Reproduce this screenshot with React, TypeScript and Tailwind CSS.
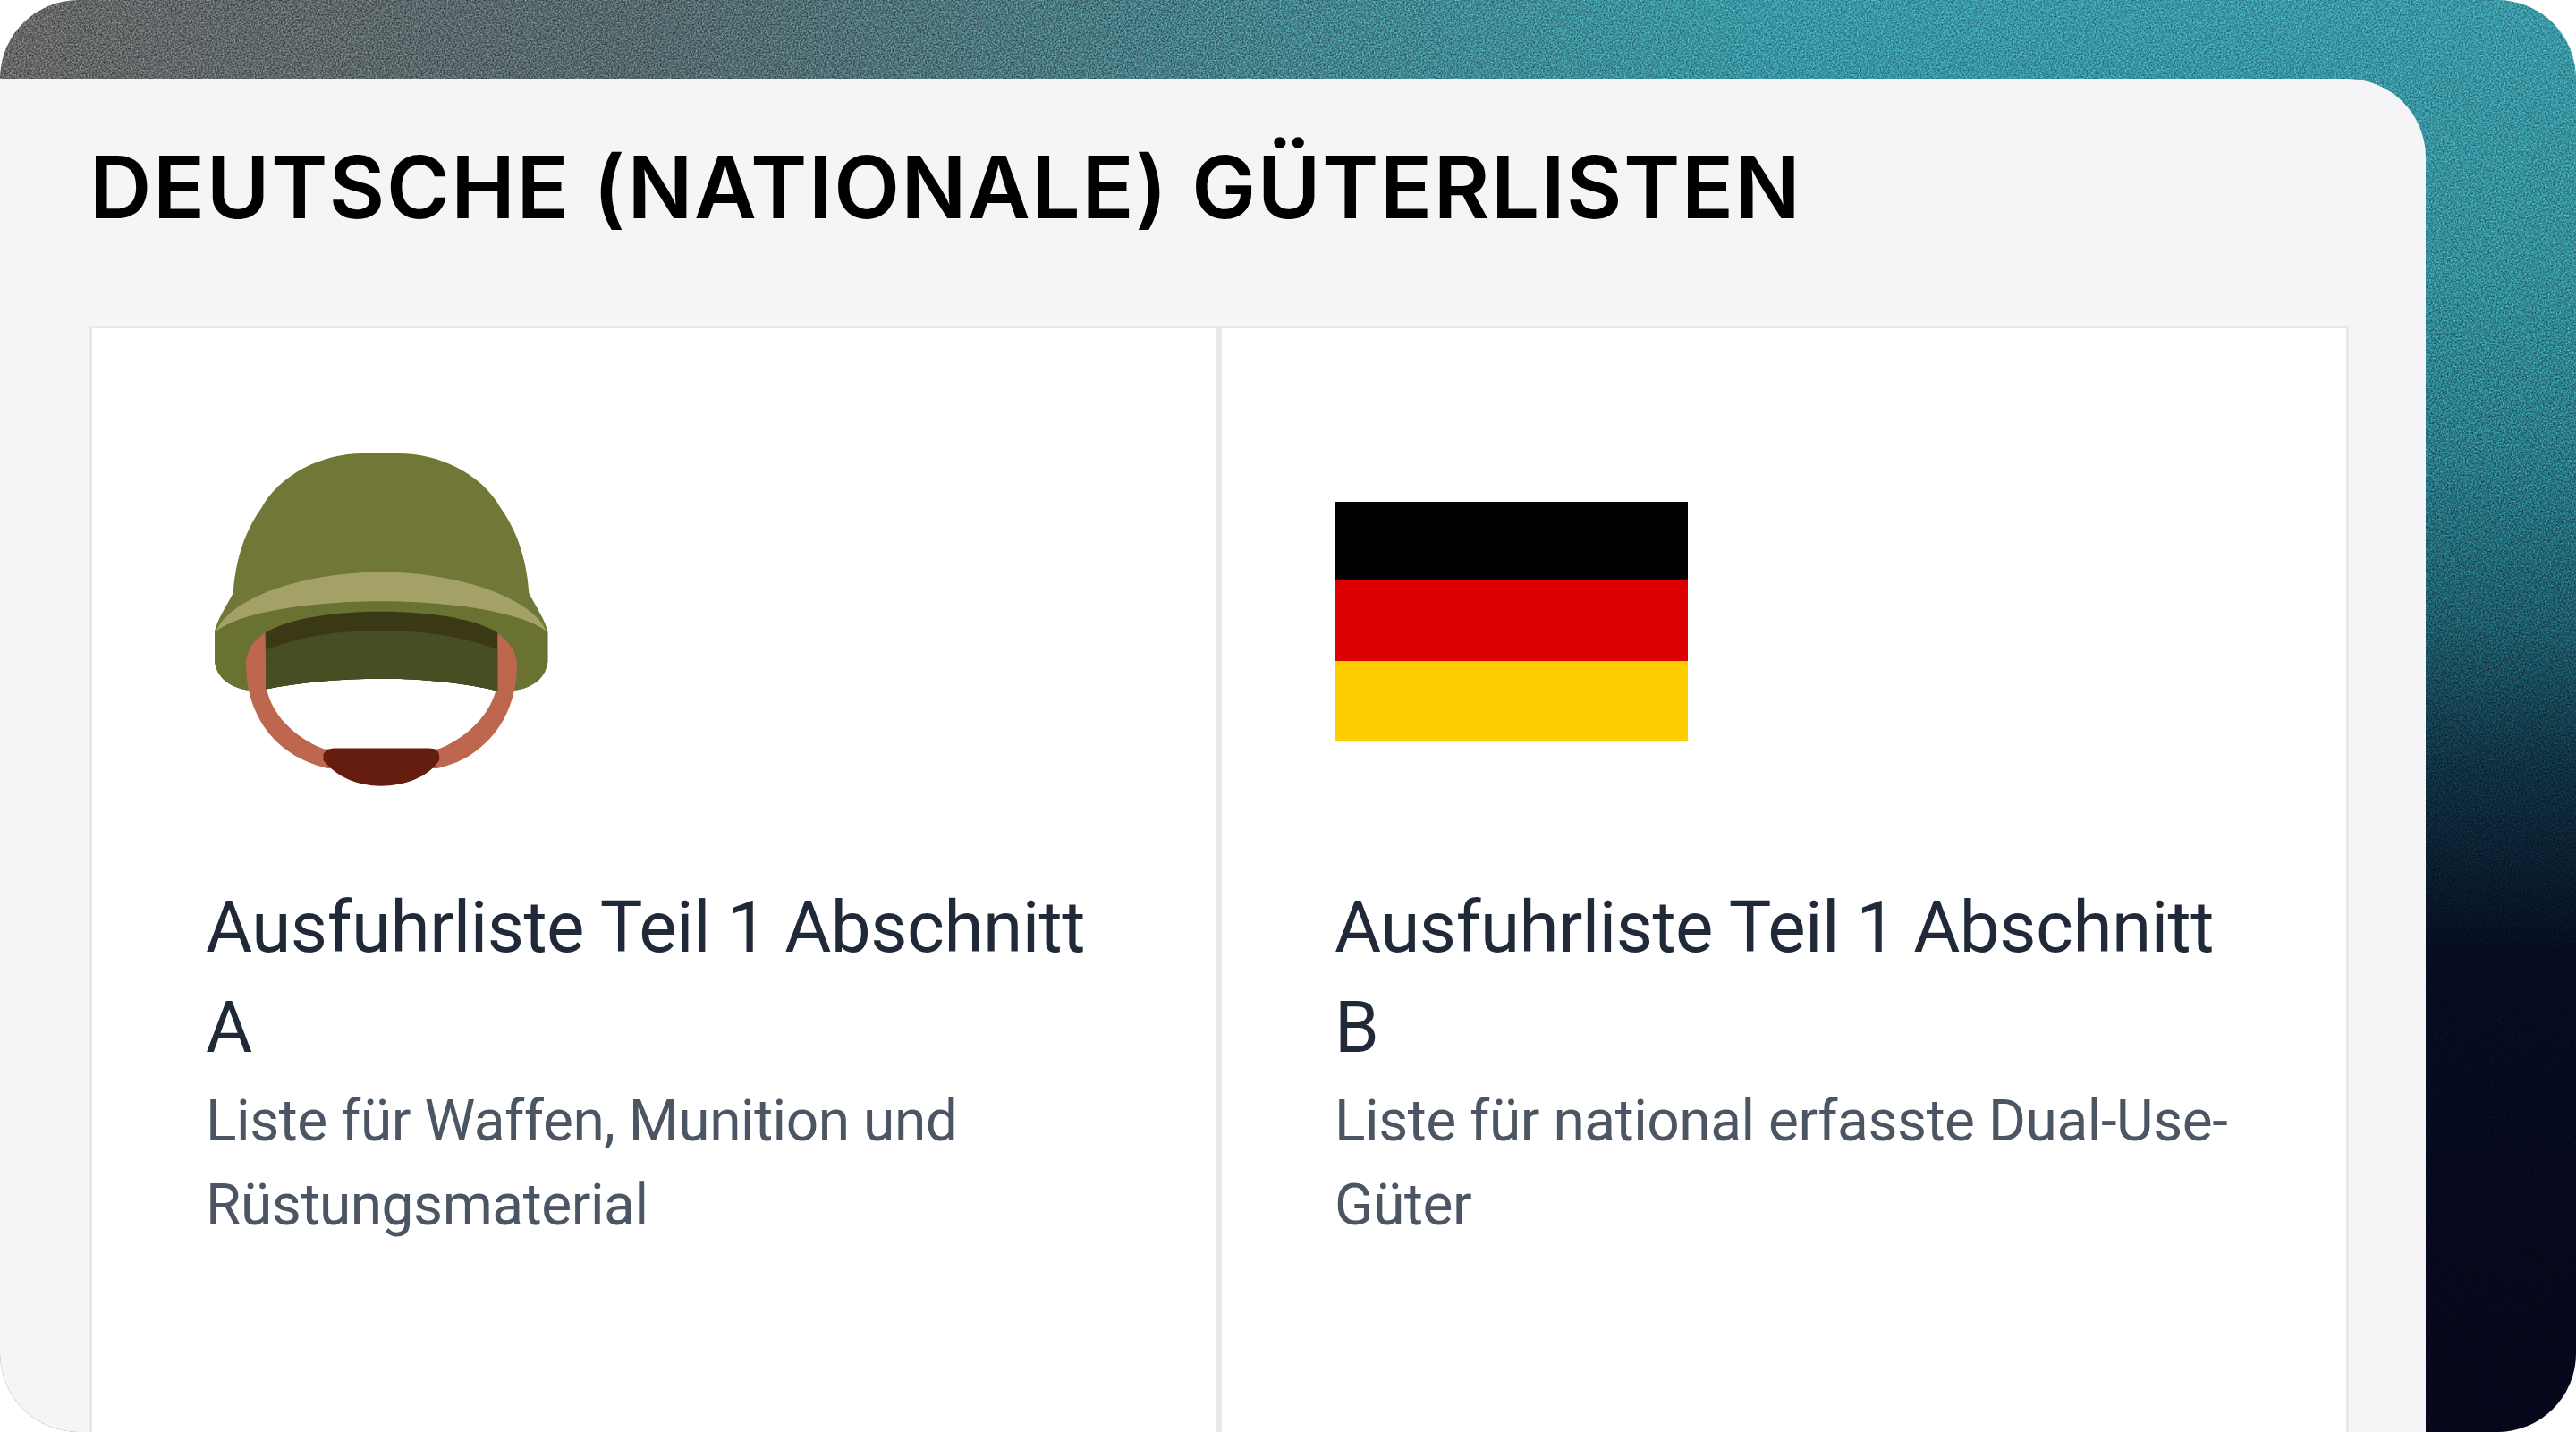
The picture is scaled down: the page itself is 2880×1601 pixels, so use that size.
const Helmet = () => (
  <svg viewBox="180 140 1120 1120" className="w-[374px] h-[374px]">
    <path
      d="M290 935 C235 925 190 895 183 840 L183 740 C190 700 225 650 245 610 C252 500 285 400 340 325 C400 215 540 143 680 143 L800 143 C940 143 1080 215 1140 325 C1195 400 1228 500 1235 610 C1255 650 1290 700 1298 740 L1298 840 C1291 895 1250 925 1195 935 L1130 938 C1010 910 880 897 740 897 C600 897 470 910 354 932 Z"
      fill="#717837"
    />
    <path
      d="M183 740 C260 680 480 638 740 638 C1000 638 1220 680 1298 740 L1298 840 C1291 895 1250 925 1195 935 L1130 938 C1010 910 880 897 740 897 C600 897 470 910 354 932 L290 935 C235 925 190 895 183 840 Z"
      fill="#6a7232"
    />
    <path
      d="M188 738 C225 640 450 542 740 540 C1030 542 1255 640 1293 738 C1220 680 1000 638 740 638 C480 638 260 680 188 738 Z"
      fill="#a3a165"
    />
    <path
      d="M350 745 C305 775 288 810 288 850 C288 960 330 1060 410 1125 C460 1165 510 1185 560 1197 L930 1197 C980 1185 1030 1165 1075 1125 C1155 1060 1195 960 1195 850 C1195 810 1170 775 1130 745 L1125 935 C1105 1010 1040 1090 930 1133 L550 1133 C440 1090 375 1010 358 935 Z"
      fill="#bd674f"
    />
    <path d="M354 742 C440 690 600 672 740 672 C880 672 1040 690 1130 742 L1130 938 C1010 910 880 897 740 897 C600 897 470 910 354 932 Z" fill="#3b3816" />
    <path d="M354 800 C470 755 600 736 740 736 C880 736 1020 755 1130 800 L1130 938 C1010 910 880 897 740 897 C600 897 470 910 354 932 Z" fill="#474e23" />
    <path d="M547 1150 C555 1135 570 1130 590 1130 L900 1130 C925 1130 938 1140 935 1170 C900 1225 820 1256 740 1256 C660 1256 590 1225 547 1170 Z" fill="#641d0f" />
  </svg>
);

const Flag = () => (
  <div className="w-[395px] flex flex-col">
    <div className="h-[88px] bg-black" />
    <div className="h-[90px] bg-[#dd0000]" />
    <div className="h-[90px] bg-[#ffce00]" />
  </div>
);

const items = [
  {
    title: "Ausfuhrliste Teil 1 Abschnitt A",
    text: "Liste für Waffen, Munition und Rüstungsmaterial",
    icon: <Helmet />,
    iconClass: "h-[376px] pt-[2px] ml-[9px]",
  },
  {
    title: "Ausfuhrliste Teil 1 Abschnitt B",
    text: "Liste für national erfasste Dual-Use-Güter",
    icon: <Flag />,
    iconClass: "h-[376px] pt-[57px]",
  },
];

export default function App() {
  return (
    <div className="relative w-[2880px] h-[1601px] overflow-hidden bg-white font-['Roboto',sans-serif]">
      <div className="relative h-full rounded-[88px] overflow-hidden bg-[linear-gradient(90deg,#666666_0%,#55686c_25%,#477d85_45%,rgba(58,149,159,0)_68%),linear-gradient(180deg,#3a97a3_0%,#348d99_300px,#2a7a88_500px,#1d5a68_700px,#0f3040_860px,#060c20_1065px,#06061a_100%)]">
        <svg className="absolute inset-0 w-full h-full opacity-50 mix-blend-overlay">
          <filter id="grain" colorInterpolationFilters="sRGB">
            <feTurbulence type="fractalNoise" baseFrequency="0.55" numOctaves="2" />
            <feColorMatrix values="1.5 0 0 0 -0.25 1.5 0 0 0 -0.25 1.5 0 0 0 -0.25 0 0 0 0 1" />
          </filter>
          <rect width="100%" height="100%" filter="url(#grain)" />
        </svg>
        <div className="relative mt-[88px] w-[2712px] h-[1513px] bg-[#f5f5f8] rounded-tr-[88px] pl-[100px] pr-[86px]">
          <h1 className="pt-[63px] h-[276px] text-[96px] leading-[116px] tracking-[1.6px] font-semibold text-black font-['Inter',sans-serif] whitespace-nowrap">
            DEUTSCHE (NATIONALE) GÜTERLISTEN
          </h1>
          <div className="grid grid-cols-2 h-[1237px] bg-white border-[3px] border-b-0 border-[#e8e8eb]">
            {items.map((item, i) => (
              <div
                key={item.title}
                className={
                  i === 0
                    ? "pl-[127px] pr-[120px] pt-[137px] border-r-[3px] border-[#e8e8eb]"
                    : "pl-[126px] pr-[120px] pt-[137px] border-l-[3px] border-[#e8e8eb]"
                }
              >
                <div className={item.iconClass}>{item.icon}</div>
                <h2 className="mt-[101px] text-[80px] leading-[112px] tracking-[-0.5px] font-normal text-[#1f2937]">{item.title}</h2>
                <p className="mt-[2px] text-[64px] leading-[94px] tracking-[-0.45px] font-normal text-[#4b5563]">{item.text}</p>
              </div>
            ))}
          </div>
        </div>
      </div>
    </div>
  );
}
